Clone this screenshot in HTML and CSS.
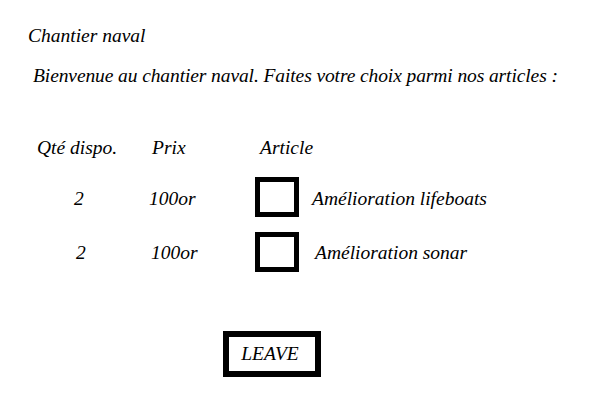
FILE: index.html
```html
<!DOCTYPE html>
<html lang="fr">
<head>
<meta charset="utf-8">
<title>Chantier naval</title>
<link rel="stylesheet" href="styles.css">
</head>
<body>
<div class="page">
  <h1 class="title">Chantier naval</h1>
  <p class="intro">Bienvenue au chantier naval. Faites votre choix parmi nos articles :</p>
  <div class="shop">
    <div class="row head">
      <span class="qty">Qté dispo.</span>
      <span class="price">Prix</span>
      <span class="article">Article</span>
    </div>
    <div class="row item item1">
      <span class="qty">2</span>
      <span class="price">100or</span>
      <span class="article"><span class="box"></span><span class="name">Amélioration lifeboats</span></span>
    </div>
    <div class="row item item2">
      <span class="qty">2</span>
      <span class="price">100or</span>
      <span class="article"><span class="box"></span><span class="name">Amélioration sonar</span></span>
    </div>
  </div>
  <div class="actions"><button class="leave">LEAVE</button></div>
</div>
</body>
</html>
```
FILE: styles.css
```css
html, body { margin: 0; padding: 0; background: #fff; }
body { font-family: "Liberation Serif", serif; font-style: italic; color: #000; font-size: 19.5px; }
.page { width: 600px; height: 409px; }
.title { margin: 0; padding: 25px 0 0 28px; font-size: 19.5px; font-weight: normal; line-height: 22px; }
.intro { margin: 0; padding: 18px 0 0 33px; line-height: 22px; letter-spacing: -0.1px; }
.shop { padding: 50px 0 0 37px; }
.row { display: grid; grid-template-columns: 112px 106px 1fr; align-items: center; }
.head { height: 22px; }
.head .price { padding-left: 3px; }
.head .article { padding-left: 5px; }
.article { display: flex; align-items: center; }
.box { width: 34px; height: 30px; border: 5px solid #000; flex: none; }
.name { margin-left: 13px; padding-top: 4px; }
.item .qty, .item .price { padding-top: 4px; }
.item1 { margin-top: 18px; height: 40px; }
.item1 .qty { padding-left: 37px; }
.item2 { margin-top: 15px; height: 40px; }
.item2 .qty { padding-left: 39px; }
.item2 .price { padding-left: 2px; }
.item2 .name { margin-left: 16px; padding-top: 2px; }
.item2 .qty, .item2 .price { padding-top: 2px; }
.actions { padding: 59px 0 0 223px; }
.leave { font: inherit; font-style: italic; background: #fff; border: 6px solid #000; width: 98px; height: 46px; padding: 0 4px 0 0; color: #000; }
```
